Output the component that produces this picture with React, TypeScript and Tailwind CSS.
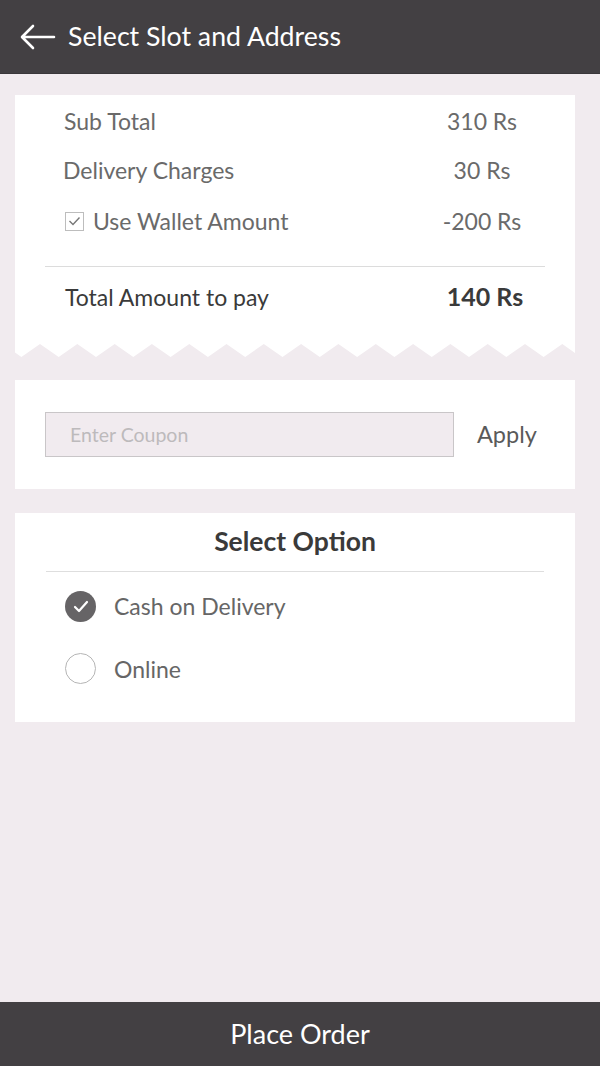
import React from "react";

function Zigzag() {
  const w = 560;
  const period = 37.3;
  const h = 13;
  const pts: string[] = ["0,0", `${w},0`];
  let x = 6.4 - period;
  const seq: [number, number][] = [];
  while (x < w + period) {
    seq.push([x, h]);
    seq.push([x + period / 2, 0]);
    x += period;
  }
  const inner = seq.map(([a, b]) => `${a.toFixed(1)},${b}`).reverse();
  return (
    <svg width={w} height={h + 2} viewBox={`0 0 ${w} ${h + 2}`} className="block">
      <polygon points={[...pts, ...inner].join(" ")} fill="#ffffff" />
    </svg>
  );
}

export default function App() {
  return (
    <div
      className="w-[600px] h-[1066px] flex flex-col bg-[#f1ebef] overflow-hidden"
      style={{ fontFamily: "Lato, 'Open Sans', sans-serif" }}
    >
      <header className="h-[74px] shrink-0 bg-[#434043] flex items-center pl-[20px] border-b border-[#3a373a]">
        <svg width="36" height="26" viewBox="0 0 36 26" fill="none" stroke="#ffffff" strokeWidth="2.6" strokeLinecap="round" strokeLinejoin="round">
          <path d="M34 13H3M13 2L2 13l11 11" />
        </svg>
        <span className="ml-[12px] text-white text-[26.7px] leading-none">Select Slot and Address</span>
      </header>

      <main className="flex-1 flex flex-col items-start px-[15px] pt-[21px]">
        <div className="w-[560px]">
          <div className="bg-white pt-[12px] pb-[33px]">
            <div className="flex items-center h-[28px] pl-[49px] pr-[18px] text-[#6a6a6a] text-[23px]">
              <span className="flex-1">Sub Total</span>
              <span className="w-[150px] text-center">310 Rs</span>
            </div>
            <div className="flex items-center h-[28px] mt-[21px] pl-[48px] pr-[18px] text-[#6a6a6a] text-[23px]">
              <span className="flex-1">Delivery Charges</span>
              <span className="w-[150px] text-center">30 Rs</span>
            </div>
            <div className="flex items-center h-[28px] mt-[23px] pl-[50px] pr-[18px] text-[#6a6a6a] text-[23px]">
              <span className="w-[19px] h-[19px] border border-[#bdbdbd] flex items-center justify-center mr-[9px]">
                <svg width="13" height="10" viewBox="0 0 13 10" fill="none" stroke="#777" strokeWidth="1.4">
                  <path d="M1.5 5l3.5 3.5L11.5 1.5" />
                </svg>
              </span>
              <span className="flex-1">Use Wallet Amount</span>
              <span className="w-[150px] text-center">-200 Rs</span>
            </div>
            <div className="mx-[30px] mt-[31px] border-t border-[#dcdcdc]" />
            <div className="flex items-center h-[28px] mt-[16px] pl-[50px] pr-[18px] text-[23px]">
              <span className="flex-1 text-[#3a3a3a]">Total Amount to pay</span>
              <span className="w-[150px] text-center text-[#3a3a3a] font-bold text-[25px] pl-[6px]">140 Rs</span>
            </div>
          </div>
          <Zigzag />
        </div>

        <div className="mt-[21px] w-[560px] bg-white h-[109px] flex items-center px-[30px]">
          <div className="w-[409px] h-[45px] shrink-0 bg-[#f1ebef] border border-[#c9c6c8] flex items-center pl-[24px] text-[19.5px] text-[#bdbabc]">
            Enter Coupon
          </div>
          <span className="ml-[23px] text-[23.5px] text-[#5a5a5a]">Apply</span>
        </div>

        <div className="mt-[24px] w-[560px] bg-white h-[209px] flex flex-col">
          <div className="h-[58px] flex items-center justify-center text-[26.5px] font-bold text-[#3a3a3a]">
            Select Option
          </div>
          <div className="mx-[31px] border-t border-[#dedede]" />
          <div className="flex items-center mt-[17px] pl-[50px]">
            <span className="w-[31px] h-[31px] rounded-full bg-[#666466] flex items-center justify-center">
              <svg width="16" height="13" viewBox="0 0 16 13" fill="none" stroke="#ffffff" strokeWidth="2.2" strokeLinecap="round" strokeLinejoin="round">
                <path d="M2 7l4 4 8-9" />
              </svg>
            </span>
            <span className="ml-[18px] text-[23px] text-[#666]">Cash on Delivery</span>
          </div>
          <div className="flex items-center mt-[28px] pl-[50px]">
            <span className="w-[31px] h-[31px] rounded-full border border-[#b5b5b5]" />
            <span className="ml-[18px] text-[23px] text-[#666]">Online</span>
          </div>
        </div>
      </main>

      <footer className="h-[64px] shrink-0 bg-[#434043] flex items-center justify-center text-white text-[27px]">
        Place Order
      </footer>
    </div>
  );
}
